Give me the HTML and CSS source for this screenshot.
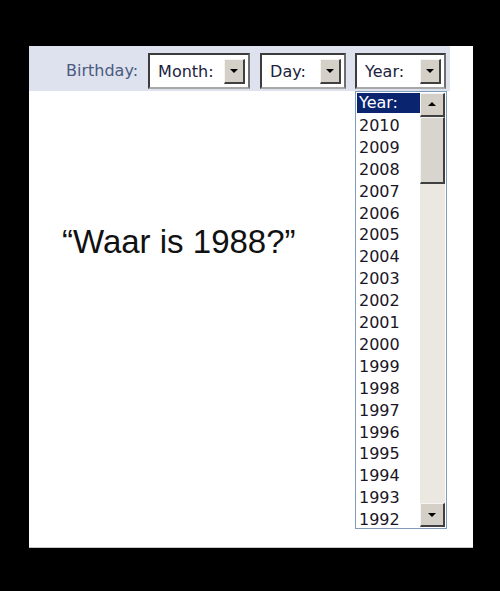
FILE: index.html
```html
<!DOCTYPE html>
<html lang="nl">
<head>
    <meta charset="UTF-8">
    <title>Birthday</title>
    <link rel="stylesheet" href="styles.css">
</head>
<body>

    <div class="panel">
        <div class="toolbar">
            <span class="label">Birthday:</span>
            <div class="combo month"><span class="combo-text">Month:</span><span class="drop-btn down"></span></div>
            <div class="combo day"><span class="combo-text">Day:</span><span class="drop-btn down"></span></div>
            <div class="combo year"><span class="combo-text">Year:</span><span class="drop-btn down"></span></div>
        </div>

        <p class="quote">“Waar is 1988?”</p>

        <div class="listbox">
            <ul class="options">
                <li class="selected">Year:</li>
                <li>2010</li>
                <li>2009</li>
                <li>2008</li>
                <li>2007</li>
                <li>2006</li>
                <li>2005</li>
                <li>2004</li>
                <li>2003</li>
                <li>2002</li>
                <li>2001</li>
                <li>2000</li>
                <li>1999</li>
                <li>1998</li>
                <li>1997</li>
                <li>1996</li>
                <li>1995</li>
                <li>1994</li>
                <li>1993</li>
                <li>1992</li>
            </ul>
            <div class="scrollbar">
                <span class="scroll-btn up"></span>
                <div class="track">
                    <span class="thumb"></span>
                </div>
                <span class="scroll-btn down"></span>
            </div>
        </div>
    </div>

</body>
</html>
```

FILE: styles.css
```css
body {
    margin: 0;
    background-color: #000;
    height: 591px;
    overflow: hidden;
}

.panel {
    position: relative;
    margin: 46px 0 0 29px;
    width: 444px;
    height: 502px;
    background-color: #fff;
    border-bottom: 1px solid #c8c8c8;
    box-sizing: border-box;
}

.toolbar {
    display: flex;
    align-items: flex-start;
    width: 421px;
    height: 45px;
    padding: 7px 0 0 37px;
    box-sizing: border-box;
    background-color: #dde2ee;
    font-family: "DejaVu Sans", Verdana, sans-serif;
    font-size: 16px;
}

.label {
    color: #4c5a80;
    line-height: 36px;
    margin-right: 10px;
}

.combo {
    display: flex;
    align-items: center;
    justify-content: space-between;
    height: 36px;
    box-sizing: border-box;
    padding: 0 3px 0 8px;
    background-color: #fff;
    border-top: 2px solid #3c3c3c;
    border-left: 2px solid #3c3c3c;
    border-right: 2px solid #6e6e6e;
    border-bottom: 2px solid #a8a8a8;
    color: #1c2240;
}

.month { width: 102px; margin-right: 10px; }
.day   { width: 86px;  margin-right: 9px; }
.year  { width: 91px; }

.drop-btn {
    position: relative;
    width: 21px;
    height: 25px;
    box-sizing: border-box;
    background-color: #d4d0c8;
    border-top: 1px solid #f4f4f4;
    border-left: 1px solid #f4f4f4;
    border-right: 2px solid #404040;
    border-bottom: 2px solid #404040;
}

.drop-btn::after,
.scroll-btn::after {
    content: "";
    position: absolute;
    left: 50%;
    top: 50%;
    margin-left: -4px;
    border-left: 4px solid transparent;
    border-right: 4px solid transparent;
}

.drop-btn.down::after,
.scroll-btn.down::after {
    margin-top: -2px;
    border-top: 4px solid #000;
}

.scroll-btn.up::after {
    margin-top: -3px;
    border-bottom: 4px solid #000;
}

.quote {
    margin: 132px 0 0 33px;
    font-family: "Liberation Sans", Arial, sans-serif;
    font-size: 33px;
    line-height: 38px;
    color: #111;
}

/* open dropdown list of the year box */
.listbox {
    position: absolute;
    left: 326px;
    top: 45px;
    width: 92px;
    height: 438px;
    box-sizing: border-box;
    border: 1px solid #7f9db9;
    background-color: #fff;
    display: flex;
    padding: 1px;
}

.options {
    flex: 1;
    list-style: none;
    margin: 0;
    padding: 0;
    font-family: "DejaVu Sans", Verdana, sans-serif;
    font-size: 16px;
    line-height: 21.9px;
    color: #1a1626;
}

.options li {
    padding-left: 2px;
}

.options li.selected {
    background-color: #0b2470;
    color: #fff;
    line-height: 20px;
    margin-bottom: 1.9px;
}

.scrollbar {
    display: flex;
    flex-direction: column;
    width: 25px;
    background-color: #ebe8e2;
}

.scroll-btn {
    position: relative;
    height: 24px;
    box-sizing: border-box;
    background-color: #d4d0c8;
    border-top: 1px solid #f4f4f4;
    border-left: 1px solid #f4f4f4;
    border-right: 2px solid #404040;
    border-bottom: 2px solid #404040;
}

.track {
    flex: 1;
}

.thumb {
    display: block;
    height: 67px;
    box-sizing: border-box;
    background-color: #d8d5ce;
    border-top: 1px solid #f4f4f4;
    border-left: 1px solid #f4f4f4;
    border-right: 2px solid #404040;
    border-bottom: 2px solid #404040;
}
```
